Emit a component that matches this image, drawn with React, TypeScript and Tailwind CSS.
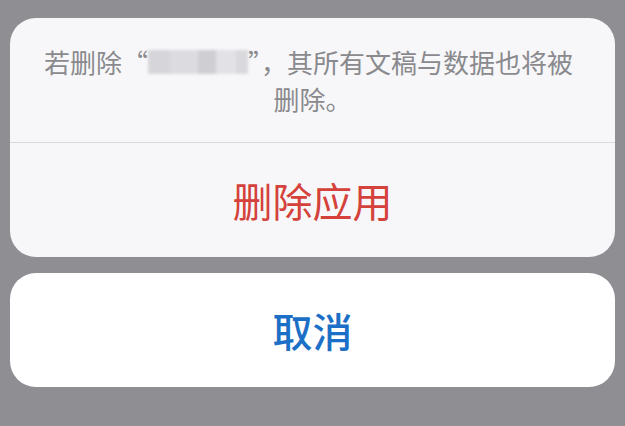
export default function App() {
  return (
    <div
      className="w-[625px] h-[426px] bg-[#8e8e93] px-[10px] pt-[18px] flex flex-col gap-[16px]"
      style={{ fontFamily: '"Noto Sans CJK SC", "Noto Sans", sans-serif' }}
    >
      <div className="bg-[#f7f7f9] rounded-[26px] overflow-hidden flex flex-col">
        <div className="h-[124px] flex flex-col items-center justify-center text-[26px] leading-[37px] text-[#8a8a8e]">
          <div className="flex items-center whitespace-nowrap -ml-[8px]">
            <span>若删除“</span>
            <span className="inline-flex h-[24px] w-[100px] blur-[1.5px]">
              <span className="w-[22px] bg-[#d6d6da]" />
              <span className="w-[28px] bg-[#dcdce0]" />
              <span className="w-[18px] bg-[#cfcfd3]" />
              <span className="w-[20px] bg-[#e2e2e6]" />
              <span className="w-[12px] bg-[#d9d9dd]" />
            </span>
            <span>”，其所有文稿与数据也将被</span>
          </div>
          <div>删除。</div>
        </div>
        <div className="h-px bg-[#d9d9dd]" />
        <button className="h-[114px] flex items-center justify-center text-[40px] text-[#d4423b]">
          删除应用
        </button>
      </div>
      <button className="h-[114px] bg-white rounded-[26px] flex items-center justify-center text-[40px] font-medium text-[#1c6fc6]">
        取消
      </button>
    </div>
  )
}
